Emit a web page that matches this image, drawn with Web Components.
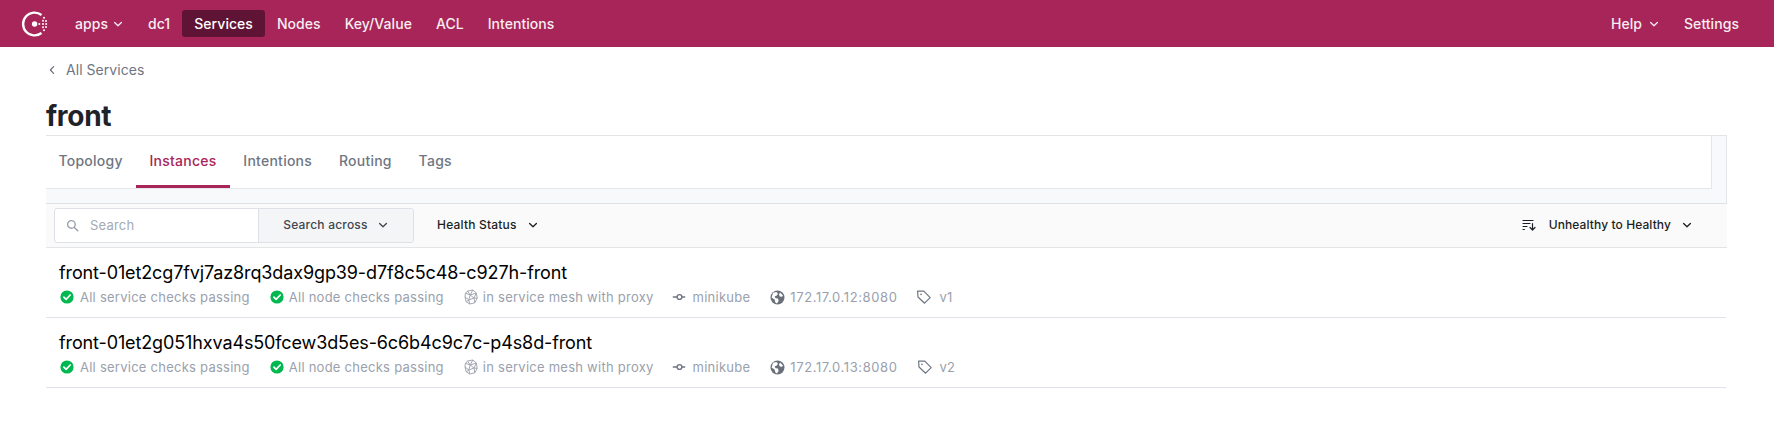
<!DOCTYPE html>
<html><head><meta charset="utf-8"><style>
html,body{margin:0;padding:0;background:#fff}
body{font-family:Inter,"Liberation Sans",sans-serif;width:1774px;height:429px;overflow:hidden}
</style></head><body>
<app-root></app-root>
<script>
const chev=(c,s=12)=>`<svg width="${s}" height="${s}" viewBox="0 0 12 12" fill="none" stroke="${c}" stroke-width="1.3" stroke-linecap="round" stroke-linejoin="round"><path d="M2.6 4.5 6 7.8l3.4-3.3"/></svg>`;
function def(name,style,html){customElements.define(name,class extends HTMLElement{connectedCallback(){if(this.shadowRoot)return;const r=this.attachShadow({mode:'open'});r.innerHTML=`<style>${style}</style>${typeof html==='function'?html(this):html}`;}});}

def('nav-item',`:host{display:flex;align-items:center;gap:4px;height:27px;padding:0 12px;border-radius:3px;color:#fff;opacity:.92;font-size:14px;font-weight:500;line-height:27px;letter-spacing:.05px}
:host([active]){background:#5f1435;opacity:1}
svg{display:block}`,()=>`<slot></slot>`);

def('top-bar',`:host{display:flex;align-items:center;justify-content:space-between;height:47px;background:#a72558;box-sizing:border-box;padding:0 23px 0 21px}
.l,.r{display:flex;align-items:center}
.r nav-item:first-child{gap:6px}
.logo{margin-right:13px;display:block}`,()=>`<div class="l">
<svg class="logo" width="29" height="28" viewBox="0 0 29 28" fill="#fff"><path d="M20.5 5A11.4 11.4 0 1 0 20.5 23" fill="none" stroke="#fff" stroke-width="2.4"/><circle cx="13.6" cy="14" r="2.7"/><circle cx="18.4" cy="14" r="1"/><circle cx="22" cy="14" r="1"/><circle cx="25.2" cy="14" r="1"/><circle cx="22" cy="10.8" r="1"/><circle cx="25" cy="11" r="1"/><circle cx="22" cy="17.2" r="1"/><circle cx="25" cy="17" r="1"/><circle cx="23" cy="7.8" r="1"/><circle cx="23" cy="20.2" r="1"/></svg>
<nav-item>apps ${chev('#fff')}</nav-item><nav-item>dc1</nav-item><nav-item active>Services</nav-item><nav-item>Nodes</nav-item><nav-item>Key/Value</nav-item><nav-item>ACL</nav-item><nav-item>Intentions</nav-item></div>
<div class="r"><nav-item>Help ${chev('#fff')}</nav-item><nav-item>Settings</nav-item></div>`);

def('page-head',`:host{display:block;padding-left:46px}
.back{display:flex;align-items:center;gap:10px;height:27px;margin-top:9px;color:#6f7682;font-size:14px;letter-spacing:.05px}
.back svg{display:block;margin-left:2px}
h1{margin:16px 0 2px;font-size:28px;line-height:34px;font-weight:700;color:#1f2329;letter-spacing:-.3px}`,()=>`<div class="back"><svg width="8" height="10" viewBox="0 0 8 10" fill="none" stroke="#6f7682" stroke-width="1.3" stroke-linecap="round" stroke-linejoin="round"><path d="M5.6 1.6 2.4 5l3.2 3.4"/></svg>All Services</div><h1>front</h1>`);

def('tab-link',`:host{display:flex;align-items:center;height:52px;padding:0 13.4px;color:#6f7682;font-size:14px;font-weight:500;letter-spacing:.25px;box-sizing:border-box;border-bottom:3px solid transparent;margin-bottom:-1px}
:host([active]){color:#a72558;border-bottom-color:#a72558}`,`<slot></slot>`);

def('tab-bar',`:host{display:block;margin:0 47px 0 46px;background:#f8f9fa;border:solid #e2e4e8;border-width:1px 1px 0 0;padding:0 14px 14px 0;}
.in{display:flex;background:#fff;border:solid #e4e6ea;border-width:0 1px 1px 0;height:52px}
.in tab-link:first-child{padding-left:12.4px}`,`<div class="in"><tab-link>Topology</tab-link><tab-link active>Instances</tab-link><tab-link>Intentions</tab-link><tab-link>Routing</tab-link><tab-link>Tags</tab-link></div>`);

def('search-bar',`:host{display:flex;align-items:center;justify-content:space-between;height:43px;margin:0 47px 0 46px;background:#fafafa;border-top:1px solid #dfe1e5;border-bottom:1px solid #e2e4e8;padding:0 0 0 8px;font-size:12px;font-weight:500;letter-spacing:.2px}
.l,.r{display:flex;align-items:center}
.box{display:flex;width:360px;height:35px;box-sizing:border-box;border:1px solid #dde0e6;border-radius:3px;background:#fff;overflow:hidden}
.q{box-sizing:border-box;flex:0 0 204px;display:flex;align-items:center;gap:11px;padding:0 0 1px 11px;color:#a4aab4;font-size:13px;font-weight:400;border-right:1px solid #dde0e6}
.a{flex:1;display:flex;align-items:center;justify-content:center;gap:9px;background:#f4f5f7;color:#40464f;padding-bottom:2px}
.h{display:flex;align-items:center;gap:10px;margin-left:23px;color:#1b1f24;padding-bottom:2px}
.s{display:flex;align-items:center;gap:10px;margin-right:34px;color:#1b1f24;padding-bottom:2px;letter-spacing:.1px}
.s svg:first-child{margin-right:3px}
svg{display:block}`,()=>`<div class="l"><div class="box"><div class="q"><svg width="13" height="13" viewBox="0 0 13 13" fill="none" stroke="#9aa1ac" stroke-width="1.4" stroke-linecap="round"><circle cx="5.4" cy="5.4" r="3.8"/><path d="m8.4 8.4 3.4 3.4"/></svg>Search</div><div class="a">Search across ${chev('#40464f')}</div></div><div class="h">Health Status ${chev('#1b1f24')}</div></div>
<div class="s"><svg width="14" height="12" viewBox="0 0 14 12" fill="none" stroke="#1b1f24" stroke-width="1.2" stroke-linecap="round" stroke-linejoin="round"><path d="M1 1.5h10M1 4.5h7M1 7.5h4M1 10.5h1.4M10.5 4.5v6.5M8 8.5l2.5 2.5L13 8.5"/></svg>Unhealthy to Healthy ${chev('#1b1f24')}</div>`);

const ic={
check:`<svg width="14" height="14" viewBox="0 0 14 14"><circle cx="7" cy="7" r="6.6" fill="#00b84f"/><path d="M3.9 7.2 6.1 9.4 10.2 5" fill="none" stroke="#fff" stroke-width="1.7" stroke-linecap="round" stroke-linejoin="round"/></svg>`,
mesh:`<svg width="14" height="16" viewBox="0 0 14 16" fill="none" stroke="#a2a8b2" stroke-width="1" stroke-linejoin="round"><path d="M3.6 2 8.8 1l3.6 3 .8 5.4-2.4 4.4-5 1.2-3.6-2.2L1 8 1.4 4.2z"/><path d="M3.6 2 6.2 6 1.4 4.2M8.8 1 6.2 6 12.4 4 10 9 13.2 9.4M6.2 6 10 9 10.8 13.8M6.2 6 4.8 11 2.2 12.8M1 8 4.8 11 10 9M4.8 11 5.8 15"/></svg>`,
node:`<svg width="14" height="10" viewBox="0 0 14 10" fill="none" stroke="#6f7682" stroke-width="1.4"><circle cx="7.5" cy="5" r="2.4"/><path d="M.8 5h4.2M10 5h3.2"/></svg>`,
globe:`<svg width="15" height="15" viewBox="0 0 15 15"><circle cx="7.5" cy="7.5" r="7" fill="#6a7079"/><path d="M3 2.8 6.4 2 8 3.8 6.8 5.6 4.6 6.4 5.6 8.2 8 8.6 8.6 11 7 13.6 5.4 12.6 4.6 9.6 1.6 7.4zM10 2.4l3 3-1 1.4-2.2-.4-.8-2z" fill="#fff"/></svg>`,
tag:`<svg width="16" height="16" viewBox="0 0 16 16" fill="none" stroke="#6f7682" stroke-width="1.2" stroke-linejoin="round"><path d="M1.6 2.2h6.2l6.4 6.4-5.6 5.6-6.6-6.2z"/><circle cx="5" cy="5.4" r=".8" fill="#6f7682" stroke="none"/></svg>`};

def('meta-item',`:host{display:flex;align-items:center;color:#9aa1ad;font-size:13px;letter-spacing:.25px;white-space:nowrap;height:18px}
svg{display:block}`,`<slot></slot>`);

def('instance-row',`:host{display:block;height:69px;margin:0 48px 0 46px;border-bottom:1px solid #dfe2e8}
.n{padding:13px 0 0 13px;font-size:18px;line-height:24px;color:#000;font-weight:400;letter-spacing:-.12px}
.m{display:flex;align-items:center;padding:3px 0 0 14px}`,el=>{const a=el.getAttribute('addr'),t=el.getAttribute('tag');return `<div class="n">${el.getAttribute('name')}</div><div class="m">
<meta-item>${ic.check}<span style="margin-left:6px">All service checks passing</span></meta-item>
<meta-item style="margin-left:20px">${ic.check}<span style="margin-left:5px">All node checks passing</span></meta-item>
<meta-item style="margin-left:20px">${ic.mesh}<span style="margin-left:5px">in service mesh with proxy</span></meta-item>
<meta-item style="margin-left:18px">${ic.node}<span style="margin-left:7px">minikube</span></meta-item>
<meta-item style="margin-left:20px">${ic.globe}<span style="margin-left:5px;letter-spacing:.6px">${a}</span></meta-item>
<meta-item style="margin-left:19px">${ic.tag}<span style="margin-left:7px">${t}</span></meta-item>
</div>`});

customElements.define('app-root',class extends HTMLElement{connectedCallback(){if(this.shadowRoot)return;const r=this.attachShadow({mode:'open'});r.innerHTML=`<style>:host{display:block}</style><top-bar></top-bar><page-head></page-head><tab-bar></tab-bar><search-bar></search-bar>
<instance-row name="front-01et2cg7fvj7az8rq3dax9gp39-d7f8c5c48-c927h-front" addr="172.17.0.12:8080" tag="v1"></instance-row>
<instance-row name="front-01et2g051hxva4s50fcew3d5es-6c6b4c9c7c-p4s8d-front" addr="172.17.0.13:8080" tag="v2"></instance-row>`;
}});
</script>
</body></html>
